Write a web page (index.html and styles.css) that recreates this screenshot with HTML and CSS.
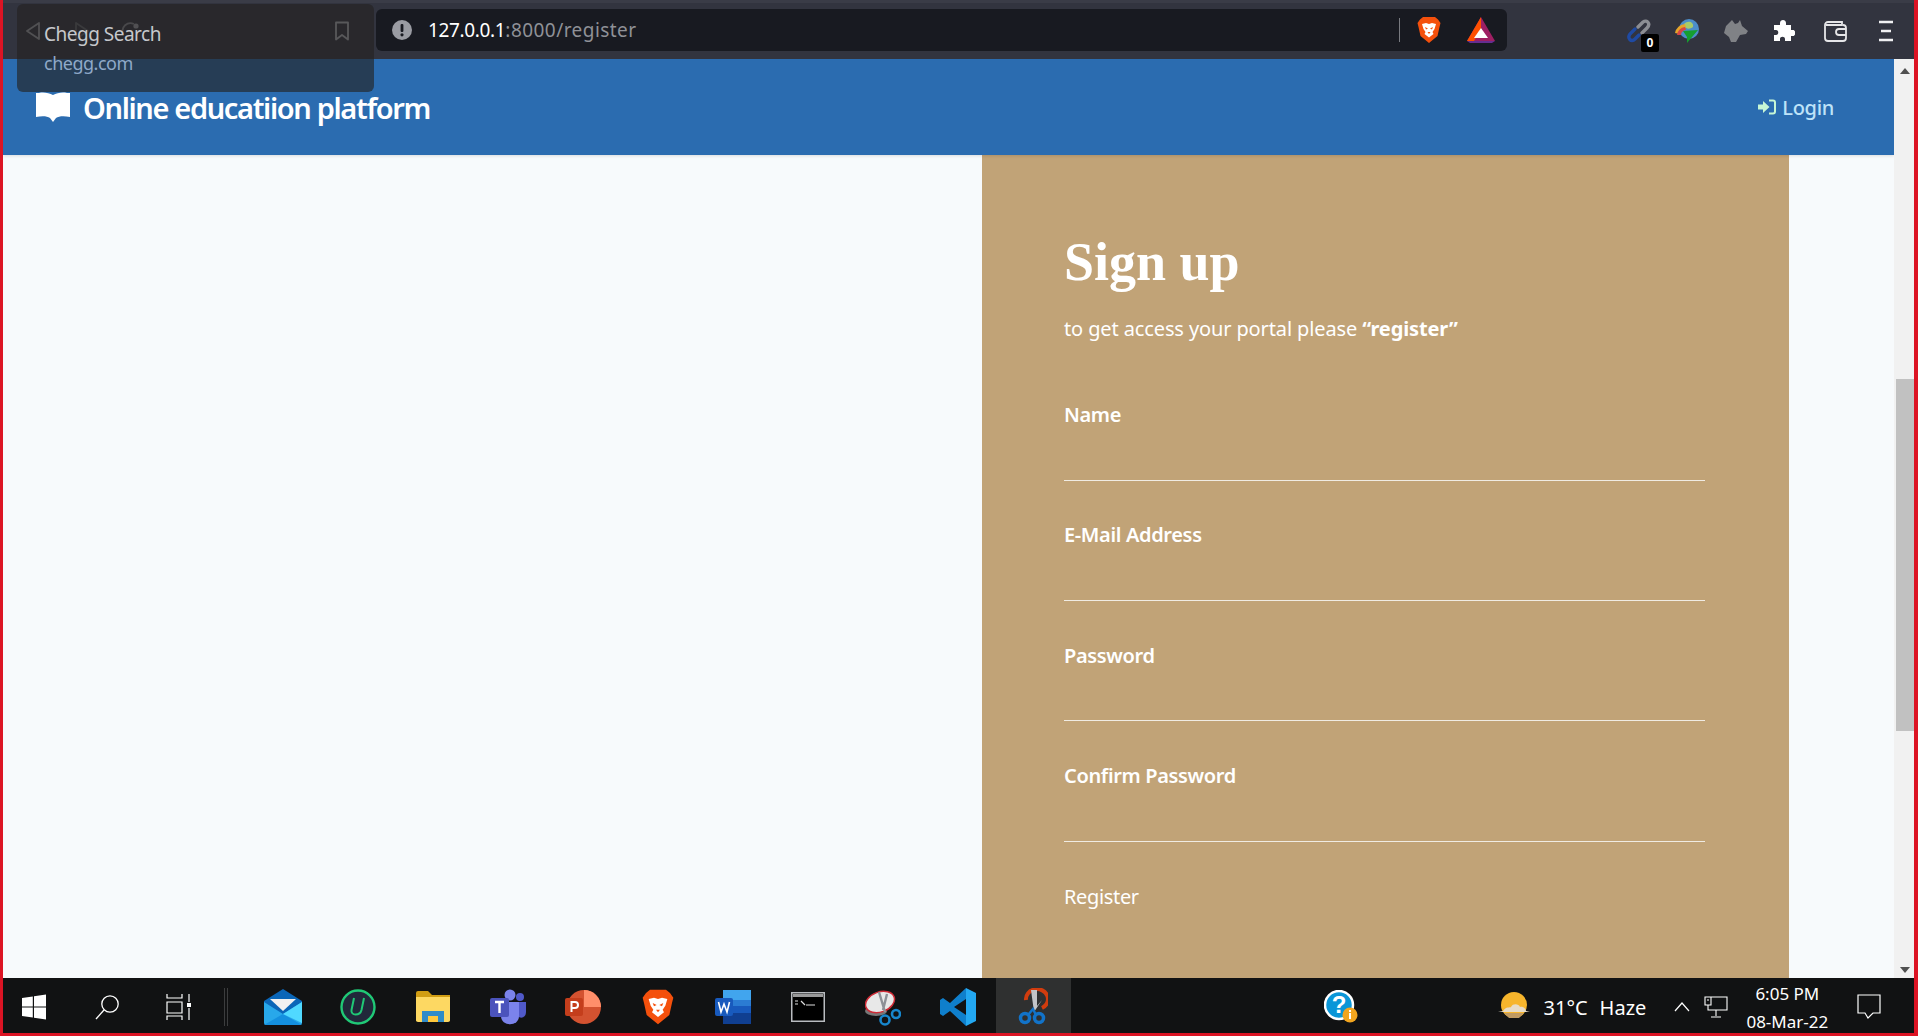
FILE: index.html
```html
<!DOCTYPE html>
<html lang="en">
<head>
<meta charset="utf-8">
<title>Online education platform</title>
<link rel="stylesheet" href="styles.css">
</head>
<body>
<div class="screen">
  <header class="toolbar">
    <div class="nav-buttons">
      <svg class="nav-back" width="16" height="20" viewBox="0 0 16 20"><path d="M14 2 L2 10 L14 18 Z" fill="none" stroke="#a0a2a8" stroke-width="1.8" stroke-linejoin="round"/></svg>
      <svg class="nav-forward" width="16" height="20" viewBox="0 0 16 20"><path d="M2 2 L14 10 L2 18 Z" fill="none" stroke="#62646a" stroke-width="1.8" stroke-linejoin="round"/></svg>
      <svg class="nav-reload" width="20" height="20" viewBox="0 0 20 20"><path d="M3 13 A8 8 0 0 1 14 3" fill="none" stroke="#8a8c92" stroke-width="1.8"/><circle cx="16" cy="5" r="2.6" fill="#a0a2a8"/></svg>
      <svg class="nav-bookmark" width="16" height="20" viewBox="0 0 16 20"><path d="M2 1.5 H14 V18.5 L8 14 L2 18.5 Z" fill="none" stroke="#b4b6bc" stroke-width="1.8" stroke-linejoin="round"/></svg>
    </div>
    <div class="address">
      <svg class="address-info" width="20" height="20" viewBox="0 0 20 20"><circle cx="10" cy="10" r="10" fill="#9a9ca3"/><rect x="8.6" y="4" width="2.8" height="8" rx="1" fill="#181a21"/><circle cx="10" cy="14.8" r="1.6" fill="#181a21"/></svg>
      <span class="url"><span class="url-host">127.0.0.1</span><span class="url-path">:8000/register</span></span>
      <span class="address-rule"></span>
      <svg class="address-icon" width="24" height="28" viewBox="0 0 24 28"><path d="M6 1 H18 L21 3.5 L23.5 7 L22.5 11 L20.5 20 L12 27 L3.5 20 L1.5 11 L.5 7 L3 3.5 Z" fill="#f4500c"/><path d="M5 8 L9 7 L12 8 L15 7 L19 8 L17.5 13 L15.5 16 L16.5 18 L12 21.5 L7.5 18 L8.5 16 L6.5 13 Z" fill="#fff"/><path d="M8 11 L11 12.5 L9 13.5 Z M16 11 L13 12.5 L15 13.5 Z M10.5 16 H13.5 L12 18 Z" fill="#f4500c"/></svg>
      <svg class="address-icon bat" width="28" height="26" viewBox="0 0 28 26"><path d="M14 0 L28 24 H0 Z" fill="#9e1f63"/><path d="M14 0 L0 24 H7 L14 12 Z" fill="#ff5000"/><path d="M0 24 H28 L25 26 H3 Z" fill="#662d91"/><path d="M14 11 L21 21 H7 Z" fill="#fff"/></svg>
    </div>
    <div class="extensions">
      <span class="ext ext-link">
        <svg width="24" height="26" viewBox="0 0 24 26"><path d="M11 9 L16 4 C20 1 24 6 20 10 L15 15" fill="none" stroke="#8c8e94" stroke-width="3.4" stroke-linecap="round"/><path d="M12 17 L8 21 C4 25 0 20 3 16 L8 11" fill="none" stroke="#1f4aa3" stroke-width="3.4" stroke-linecap="round"/></svg>
        <span class="ext-badge">0</span>
      </span>
      <svg class="ext" width="26" height="26" viewBox="0 0 26 26"><circle cx="15" cy="11" r="10" fill="#4d8ec9"/><path d="M10 6 C14 2 20 4 19 9 C15 12 11 11 10 6 Z" fill="#a7cc6a"/><path d="M1 15 A11 11 0 0 1 11 6 L12 10 A7 7 0 0 0 6 16 Z" fill="#e6a52a"/><path d="M3 17 A9 9 0 0 1 11 9 L12 12 A5 5 0 0 0 7 17 Z" fill="#d64545"/><path d="M9 13 L24 12 L13 25 L13 19 Z" fill="#159e2f"/></svg>
      <svg class="ext" width="26" height="26" viewBox="0 0 26 26"><path d="M9 2 L12 6 L15 5 L17 2 L19 8 L25 13 L23 16 L17 17 L13 24 H8 L6 19 L1 15 L3 8 Z" fill="#808286"/></svg>
      <svg class="ext ext-puzzle" width="24" height="24" viewBox="0 0 24 24"><path d="M9 4 C9 0 15 0 15 4 V6 H20 V11 H22 C25 11 25 17 22 17 H20 V22 H14 V20 C14 17 9 17 9 20 V22 H3 V16 H5 C8 16 8 11 5 11 H3 V6 H9 Z" fill="#fff"/></svg>
      <svg class="ext ext-wallet" width="24" height="22" viewBox="0 0 24 22"><path d="M3 5 H19 V2 H5 A3 3 0 0 0 2 5 V18 A3 3 0 0 0 5 21 H20 A3 3 0 0 0 23 18 V8 A3 3 0 0 0 20 5" fill="none" stroke="#e6e6e8" stroke-width="1.8"/><path d="M23 9 H16 A2.5 2.5 0 0 0 16 15 H23" fill="none" stroke="#e6e6e8" stroke-width="1.8"/></svg>
      <svg class="ext ext-menu" width="16" height="22" viewBox="0 0 16 22"><path d="M1 2 H15 M3 11 H13 M1 20 H15" stroke="#f0f0f2" stroke-width="2.4"/></svg>
    </div>
  </header>

  <div class="tooltip">
    <div class="tooltip-title">Chegg Search</div>
    <div class="tooltip-url">chegg.com</div>
  </div>

  <div class="viewport">
    <main class="page">
      <nav class="navbar">
        <a class="brand">
          <svg width="34" height="30" viewBox="0 0 34 30"><path d="M0 1 L3 1 C8 0 13 1 17 3 C21 1 26 0 31 1 H34 V25 C28 24 23 24 20 26 L17 30 L14 26 C11 24 6 24 0 25 Z" fill="#fff"/></svg>
          <span>Online educatiion platform</span>
        </a>
        <a class="login">
          <svg width="18" height="16" viewBox="0 0 18 16"><path d="M0 5.5 H5 V2 L11.5 8 L5 14 V10.5 H0 Z" fill="#c6f6d5"/><path d="M11 1.5 H15 A2 2 0 0 1 17 3.5 V12.5 A2 2 0 0 1 15 14.5 H11" fill="none" stroke="#c6f6d5" stroke-width="2"/></svg>
          <span>Login</span>
        </a>
      </nav>
      <section class="content">
        <div class="spacer"></div>
        <form class="panel">
          <h1 class="panel-title">Sign up</h1>
          <p class="panel-lead">to get access your portal please <strong>“register”</strong></p>
          <div class="field"><label class="field-label">Name</label><input class="field-input" type="text"></div>
          <div class="field"><label class="field-label">E-Mail Address</label><input class="field-input" type="email"></div>
          <div class="field"><label class="field-label">Password</label><input class="field-input" type="password"></div>
          <div class="field"><label class="field-label">Confirm Password</label><input class="field-input" type="password"></div>
          <button class="submit" type="button">Register</button>
        </form>
      </section>
    </main>
    <aside class="scrollbar">
      <span class="arrow-up"></span>
      <div class="scroll-track"><div class="scroll-thumb"></div></div>
      <span class="arrow-down"></span>
    </aside>
  </div>

  <footer class="taskbar">
    <div class="system">
      <span class="slot"><svg width="24" height="26" viewBox="0 0 24 26"><path d="M0 4 L10.8 2.4 V12.4 H0 Z M12 2.2 L24 .4 V12.4 H12 Z M0 13.6 H10.8 V23.6 L0 22 Z M12 13.6 H24 V25.6 L12 23.8 Z" fill="#fff"/></svg></span>
      <span class="slot"><svg width="24" height="26" viewBox="0 0 24 26"><circle cx="15" cy="10" r="8.2" fill="none" stroke="#fff" stroke-width="1.3"/><path d="M9 16 L1 25" stroke="#fff" stroke-width="1.3"/></svg></span>
      <span class="slot"><svg width="26" height="26" viewBox="0 0 26 26"><path d="M1 0 V4 H16 V0 M1 8 H16 V19 H1 Z M1 26 V22 H16 V26 M23 0 V8 M23 14 V26" fill="none" stroke="#fff" stroke-width="1.2"/><rect x="21" y="9" width="4" height="4" fill="#fff"/></svg></span>
    </div>
    <span class="divider"></span>
    <div class="apps">
      <span class="app"><svg width="38" height="36" viewBox="0 0 38 36"><path d="M0 12 L19 0 L38 12 V34 H0 Z" fill="#0a66b8"/><path d="M6 10 H32 L19 22 Z" fill="#f1f1f1"/><path d="M0 13 L19 25 L38 13 V34 A2 2 0 0 1 36 36 H2 A2 2 0 0 1 0 34 Z" fill="#28a8ea"/><path d="M0 36 L19 25 L38 36 Z" fill="#1490df"/><path d="M38 13 V34 L19 25 Z" fill="#50d9ff"/></svg></span>
      <span class="app"><svg width="36" height="36" viewBox="0 0 36 36"><circle cx="18" cy="18" r="16.5" fill="#21283a" stroke="#20c876" stroke-width="2.4"/><path d="M14 9 L11.5 21 C10.5 27 20 27 21.5 21 L24 9" fill="none" stroke="#20c876" stroke-width="2"/></svg></span>
      <span class="app"><svg width="34" height="32" viewBox="0 0 34 32"><path d="M0 2 A2 2 0 0 1 2 0 H12 L16 4 H34 V30 H0 Z" fill="#d19d13"/><path d="M0 6 H34 V29 A2 2 0 0 1 32 31 H2 A2 2 0 0 1 0 29 Z" fill="#fdd862"/><path d="M6 31 V20 H28 V31 H22 V25 H12 V31 Z" fill="#2f8bc9"/><rect x="12" y="25" width="10" height="6" fill="#ffc83d"/></svg></span>
      <span class="app"><svg width="36" height="36" viewBox="0 0 36 36"><circle cx="20" cy="6" r="5.5" fill="#7b83eb"/><circle cx="30" cy="8" r="4" fill="#5059c9"/><path d="M26 13 H36 V23 C36 29 30 30 28 27 Z" fill="#5059c9"/><path d="M11 13 H29 V27 C29 38 11 38 11 27 Z" fill="#7b83eb"/><rect x="0" y="9" width="19" height="19" rx="2" fill="#4b53bc"/><path d="M5 13 H14 M9.5 13 V24" stroke="#fff" stroke-width="2.4"/></svg></span>
      <span class="app"><svg width="36" height="34" viewBox="0 0 36 34"><circle cx="19" cy="17" r="17" fill="#d35230"/><path d="M19 0 A17 17 0 0 1 36 17 H19 Z" fill="#ff8f6b"/><rect x="0" y="8" width="18" height="18" rx="2" fill="#c43e1c"/><path d="M6.5 22 V12 H10 A3 3 0 0 1 10 18 H6.5" fill="none" stroke="#fff" stroke-width="2"/></svg></span>
      <span class="app"><svg width="32" height="38" viewBox="0 0 24 28"><path d="M6 1 H18 L21 3.5 L23.5 7 L22.5 11 L20.5 20 L12 27 L3.5 20 L1.5 11 L.5 7 L3 3.5 Z" fill="#f4500c"/><path d="M5 8 L9 7 L12 8 L15 7 L19 8 L17.5 13 L15.5 16 L16.5 18 L12 21.5 L7.5 18 L8.5 16 L6.5 13 Z" fill="#fff"/><path d="M8 11 L11 12.5 L9 13.5 Z M16 11 L13 12.5 L15 13.5 Z M10.5 16 H13.5 L12 18 Z" fill="#f4500c"/></svg></span>
      <span class="app"><svg width="36" height="34" viewBox="0 0 36 34"><rect x="8" y="0" width="28" height="34" rx="2" fill="#2b7cd3"/><rect x="8" y="0" width="28" height="10" fill="#41a5ee"/><rect x="8" y="23" width="28" height="11" fill="#103f91"/><rect x="8" y="16" width="28" height="7" fill="#185abd"/><rect x="0" y="8" width="18" height="18" rx="2" fill="#185abd"/><path d="M3.5 12 L6 22 L9 14 L12 22 L14.5 12" fill="none" stroke="#fff" stroke-width="1.6"/></svg></span>
      <span class="app"><svg width="34" height="30" viewBox="0 0 34 30"><rect x=".75" y=".75" width="32.5" height="28.5" fill="#000" stroke="#b9bcc0" stroke-width="1.5"/><rect x="2" y="2" width="30" height="3" fill="#999"/><path d="M4 9 H7 M4 12 H7 M10 9 L14 13 M15 13 H24" stroke="#ddd" stroke-width="1.2"/></svg></span>
      <span class="app"><svg width="36" height="38" viewBox="0 0 36 38"><ellipse cx="11" cy="23" rx="11" ry="5" fill="#777"/><ellipse cx="15" cy="14" rx="15" ry="10" fill="#e8e8e8" stroke="#cf2b36" stroke-width="1.5" transform="rotate(-20 15 14)"/><path d="M14 4 L20 24 M22 6 L18 22" stroke="#8d9096" stroke-width="2.4"/><circle cx="20" cy="32" r="4.5" fill="none" stroke="#1786cc" stroke-width="2.6"/><circle cx="31" cy="26" r="4" fill="none" stroke="#1786cc" stroke-width="2.6"/></svg></span>
      <span class="app"><svg width="36" height="38" viewBox="0 0 36 38"><path d="M26 0 L10 15 L3 10 L0 12 V26 L3 28 L10 23 L26 38 V27 L14 19 L26 11 Z" fill="#0f7fcc"/><path d="M26 0 L36 5 V33 L26 38 Z" fill="#23a8f2"/></svg></span>
      <span class="app app-active"><svg width="30" height="38" viewBox="0 0 30 38"><path d="M8 12 A11 10 0 1 1 24 20" fill="none" stroke="#d13c0e" stroke-width="4"/><path d="M13 2 H19 V18 L24 12 L16 24 Z" fill="#c3c5c8"/><circle cx="7" cy="30" r="4.5" fill="none" stroke="#1273c9" stroke-width="3.5"/><circle cx="21" cy="30" r="4.5" fill="none" stroke="#1273c9" stroke-width="3.5"/><path d="M10 27 L15 21 L18 27" stroke="#1273c9" stroke-width="2.5" fill="none"/></svg></span>
    </div>
    <div class="tray">
      <svg class="tray-help" width="34" height="34" viewBox="0 0 34 34"><circle cx="15" cy="15" r="14" fill="#0a96d8" stroke="#fff" stroke-width="2.5"/><text class="tray-help-mark" x="15" y="23">?</text><circle cx="26" cy="25" r="7.5" fill="#f2a51f"/><rect x="25" y="23" width="2" height="6" fill="#fff"/><rect x="25" y="20" width="2" height="2" fill="#fff"/></svg>
      <div class="weather">
        <svg width="32" height="32" viewBox="0 0 32 32"><circle cx="16" cy="14" r="13" fill="#f7b52c"/><path d="M5 20 C8 15 12 17 13 16 C15 12 21 13 22 16 C25 15 28 18 28 20 L32 21 H0 Z" fill="#e8dcc8"/><path d="M6 22 H26 L21 27 H11 Z" fill="#c09a62"/></svg>
        <span class="weather-temp">31°C</span>
        <span class="weather-state">Haze</span>
      </div>
      <svg class="tray-chevron" width="16" height="10" viewBox="0 0 16 10"><path d="M1 9 L8 1 L15 9" fill="none" stroke="#fff" stroke-width="1.2"/></svg>
      <svg class="tray-network" width="24" height="22" viewBox="0 0 24 22"><path d="M6 1 H23 V14 H6 M12 14 V20 M7 21 H17 M1 1 H7 V9 H1 Z M4 9 V14 H6 M3 4 H5" fill="none" stroke="#fff" stroke-width="1.1"/></svg>
      <div class="clock"><span>6:05 PM</span><span>08-Mar-22</span></div>
      <svg class="tray-action" width="24" height="26" viewBox="0 0 24 26"><path d="M1 1 H23 V19 H16 L11 24 L8 19 H1 Z" fill="none" stroke="#fff" stroke-width="1.2"/></svg>
    </div>
  </footer>
</div>
</body>
</html>
```

FILE: styles.css
```css
* { box-sizing: border-box; }

html, body {
  margin: 0;
  height: 100%;
  overflow: hidden;
}

body {
  font-family: "Noto Sans", "Open Sans", sans-serif;
}

.screen {
  position: relative;
  display: flex;
  flex-direction: column;
  width: 1918px;
  height: 1036px;
  border-left: 3px solid #dc1424;
  border-right: 4px solid #dc1424;
  border-bottom: 3px solid #dc1424;
  overflow: hidden;
}

/* Browser toolbar */
.toolbar {
  display: flex;
  align-items: center;
  flex: 0 0 59px;
  padding-top: 3px;
  background: #32343f;
  box-shadow: inset 0 3px 0 #3a3c47;
}

.nav-buttons {
  display: flex;
  align-items: center;
  flex: 0 0 373px;
  height: 42px;
  padding-left: 22px;
}

.nav-forward { margin-left: 33px; }
.nav-reload { margin-left: 30px; }
.nav-bookmark { margin-left: 194px; }

.address {
  display: flex;
  align-items: center;
  flex: 0 0 1131px;
  height: 42px;
  margin-top: -2px;
  padding-left: 16px;
  background: #181a21;
  border-radius: 6px;
}

.url {
  margin-left: 16px;
  font-size: 19px;
  letter-spacing: -.35px;
}

.url-host { color: #fff; }

.url-path {
  color: #8f9197;
  letter-spacing: .45px;
}

.address-rule {
  width: 1px;
  height: 24px;
  margin-left: auto;
  background: #787a80;
}

.address-icon { margin-left: 17px; }
.address-icon.bat { margin: 0 12px 0 26px; }

.extensions {
  display: flex;
  align-items: center;
  margin-left: 120px;
  flex: 1;
}

.ext {
  display: block;
  position: relative;
  margin-right: 23px;
}

.ext svg { display: block; }

.ext-puzzle { margin-left: -1px; margin-right: 28px; }
.ext-wallet { margin-right: 31px; }
.ext-menu { margin-right: 0; }

.ext-badge {
  position: absolute;
  right: -8px;
  bottom: -8px;
  width: 18px;
  height: 18px;
  border-radius: 2px;
  background: #000;
  color: #fff;
  font-size: 12px;
  font-weight: 700;
  line-height: 18px;
  text-align: center;
}

/* Hover tooltip over the toolbar */
.tooltip {
  position: absolute;
  z-index: 5;
  left: 14px;
  top: 4px;
  width: 357px;
  height: 88px;
  padding: 17px 0 0 27px;
  border-radius: 6px;
  background: rgba(36, 34, 34, .64);
}

.tooltip-title {
  font-size: 19px;
  line-height: 26px;
  letter-spacing: -.5px;
  color: #c6c8cc;
}

.tooltip-url {
  margin-top: 4px;
  font-size: 18px;
  line-height: 24px;
  letter-spacing: -.5px;
  color: #8fa9c8;
}

/* Page viewport */
.viewport {
  display: flex;
  flex: 1;
  min-height: 0;
}

.page {
  flex: 1;
  min-width: 0;
  background: #f7fafc;
  overflow: hidden;
}

.navbar {
  display: flex;
  align-items: center;
  justify-content: space-between;
  height: 96px;
  padding: 0 60px 0 33px;
  background: #2b6cb0;
  box-shadow: 0 1px 3px rgba(0, 0, 0, .12);
  position: relative;
}

.brand {
  display: flex;
  align-items: center;
  gap: 13px;
  color: #fff;
  font-size: 29px;
  font-weight: 600;
  letter-spacing: -1.35px;
}

.login {
  display: flex;
  align-items: center;
  gap: 6px;
  color: #bee3f8;
  font-size: 20px;
  font-weight: 500;
  letter-spacing: -.3px;
}

.content { display: flex; }

.spacer { flex: 1; }

.panel {
  flex: 0 0 807px;
  height: 900px;
  margin-right: 105px;
  padding: 76px 84px 0 82px;
  background: #c1a377;
  color: #fff;
}

.panel-title {
  margin: 0;
  font-family: "Liberation Serif", serif;
  font-size: 54px;
  font-weight: 700;
  line-height: 62px;
}

.panel-lead {
  margin: 22px 0 58px;
  font-size: 20px;
  line-height: 28px;
  letter-spacing: -.12px;
}

.panel-lead strong { font-weight: 700; }

.field {
  display: flex;
  flex-direction: column;
  height: 120.4px;
}

.field-label {
  font-size: 20px;
  font-weight: 600;
  line-height: 28px;
  letter-spacing: -.35px;
}

.field-input {
  width: 100%;
  height: 51.5px;
  margin-top: 0;
  padding: 0;
  border: 0;
  border-bottom: 1.5px solid #f0ebe2;
  background: transparent;
  outline: none;
}

.submit {
  padding: 0;
  border: 0;
  background: none;
  color: #fff;
  font-family: inherit;
  font-size: 20px;
  line-height: 28px;
  letter-spacing: -.35px;
}

/* Scrollbar */
.scrollbar {
  display: flex;
  flex-direction: column;
  align-items: center;
  flex: 0 0 20px;
  padding: 0 0 0 2px;
  background: #f1f1f1;
}

.arrow-up,
.arrow-down {
  width: 0;
  height: 0;
  border-left: 5.5px solid transparent;
  border-right: 5.5px solid transparent;
}

.arrow-up {
  flex: 0 0 auto;
  margin: 9px 0 8px;
  border-bottom: 6px solid #505050;
}

.arrow-down {
  flex: 0 0 auto;
  margin: 8px 0 5px;
  border-top: 6px solid #505050;
}

.scroll-track {
  flex: 1;
  align-self: stretch;
  padding-top: 297px;
}

.scroll-thumb {
  height: 352px;
  background: #c1c1c1;
}

/* Windows taskbar */
.taskbar {
  display: flex;
  align-items: center;
  flex: 0 0 55px;
  min-height: 0;
  background: #111213;
  color: #fff;
}

.system {
  display: flex;
  flex: 0 0 226px;
  margin-left: -5px;
  padding-top: 3px;
}

.slot {
  display: flex;
  align-items: center;
  justify-content: center;
  flex: 0 0 72.5px;
}

.divider {
  width: 4px;
  height: 38px;
  margin-top: 3px;
  border-left: 1px solid #3c3d3e;
  border-right: 1px solid #3c3d3e;
}

.apps {
  display: flex;
  margin-left: 17.5px;
}

.app {
  display: flex;
  align-items: center;
  justify-content: center;
  width: 75px;
  height: 55px;
  padding-top: 3px;
}

.app-active {
  background: #2f3030;
}

.tray {
  display: flex;
  align-items: center;
  flex: 1;
  height: 100%;
  padding-left: 253px;
  padding-top: 3px;
}

.tray-help-mark {
  fill: #fff;
  font-family: "Liberation Sans", sans-serif;
  font-size: 24px;
  font-weight: 700;
  text-anchor: middle;
}

.weather {
  display: flex;
  align-items: center;
  margin-left: 140px;
  font-size: 20px;
}

.weather-temp { margin-left: 14px; }
.weather-state { margin-left: 12px; }

.tray-chevron { margin-left: 28px; }
.tray-network { margin-left: 14px; }

.clock {
  display: flex;
  flex-direction: column;
  align-items: center;
  width: 110px;
  margin: 1px 0 0 4px;
  font-size: 17px;
  line-height: 28px;
}

.tray-action { margin-left: 15px; }
```
